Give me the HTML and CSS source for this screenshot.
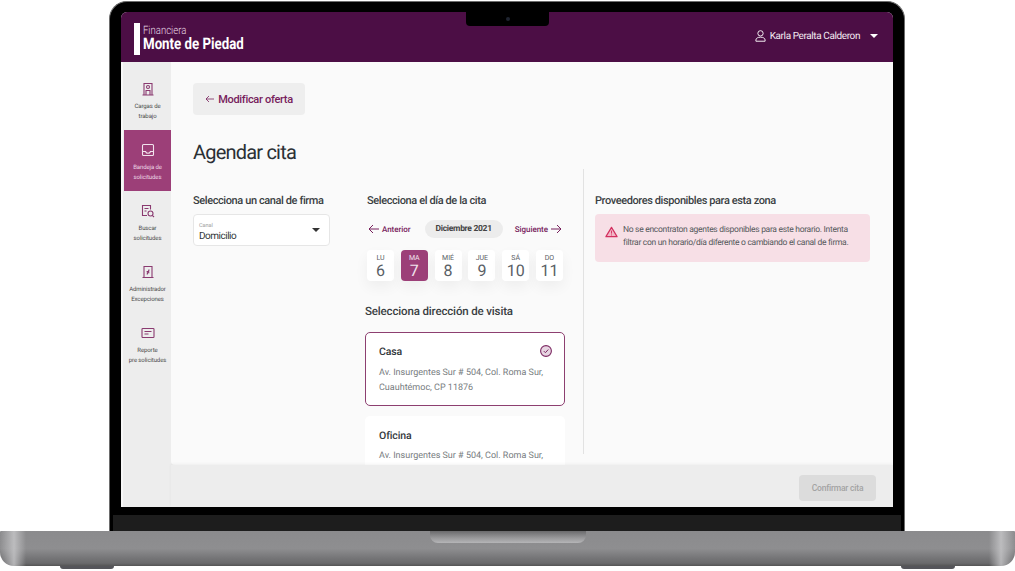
FILE: index.html
```html
<!DOCTYPE html>
<html lang="es">
<head>
  <meta charset="UTF-8" />
  <title>Agendar cita - Monte de Piedad</title>
  <link rel="stylesheet" href="styles.css">
</head>
<body>
  <div class="laptop">
    <div class="lid">
      <div class="screen">
        <div class="notch"><span class="camera"></span></div>
        <header class="topbar">
          <div class="logo">
            <span class="logo-bar"></span>
            <div class="logo-text">
              <span class="logo-small">Financiera</span>
              <span class="logo-big">Monte de Piedad</span>
            </div>
          </div>
          <div class="user">
            <svg class="user-icon" viewBox="0 0 12 13" fill="none" stroke="#fff" stroke-width="1"><circle cx="6" cy="3.6" r="2.9"/><path d="M1 12.2h10v-1.4c0-1.8-2-3-5-3s-5 1.2-5 3z"/></svg>
            <span class="user-name">Karla Peralta Calderon</span>
            <span class="caret caret-white"></span>
          </div>
        </header>
        <div class="app">
          <nav class="sidebar">
            <a class="nav-item">
              <svg viewBox="0 0 14 14" fill="none" stroke="currentColor" stroke-width="1.1"><path d="M3 13V1.500h8V13M1.500 13h11"/><circle cx="7" cy="5" r="1.500"/><path d="M5 13V8.500h4V13"/></svg>
              <span>Cargas de<br>trabajo</span>
            </a>
            <a class="nav-item active">
              <svg viewBox="0 0 14 14" fill="none" stroke="currentColor" stroke-width="1.1"><rect x="1.500" y="1.500" width="11" height="11" rx="1"/><path d="M1.500 8.500h3c.4 1.200 1.300 1.800 2.500 1.800s2.100-.6 2.500-1.800h3"/></svg>
              <span>Bandeja de<br>solicitudes</span>
            </a>
            <a class="nav-item">
              <svg viewBox="0 0 14 14" fill="none" stroke="currentColor" stroke-width="1.1"><path d="M6 11.500H1.500v-10h8v4M3.500 4.500h4M3.500 7h2"/><circle cx="9.500" cy="9.500" r="2.500"/><path d="M11.300 11.300l1.700 1.700"/></svg>
              <span>Buscar<br>solicitudes</span>
            </a>
            <a class="nav-item">
              <svg viewBox="0 0 14 14" fill="none" stroke="currentColor" stroke-width="1.1"><path d="M3 12.500V1.500h8v11M1.500 12.500h11"/><path d="M8.200 4.500L6 9.500M5.600 6.500h2.600M5.800 7.800h2.600"/></svg>
              <span>Administrador<br>Excepciones</span>
            </a>
            <a class="nav-item">
              <svg viewBox="0 0 14 14" fill="none" stroke="currentColor" stroke-width="1.1"><rect x="1" y="2.500" width="12" height="9" rx=".8"/><path d="M3.500 5.500h7M3.500 8h4"/></svg>
              <span>Reporte<br>pre solicitudes</span>
            </a>
          </nav>
          <div class="main">
            <div class="content">
              <button class="back-btn">
                <svg viewBox="0 0 9 8" fill="none" stroke="currentColor" stroke-width=".8"><path d="M9 4H1M4 1L1 4l3 3"/></svg>
                Modificar oferta
              </button>
              <h1>Agendar cita</h1>
              <div class="columns">
                <section class="col-channel">
                  <h2>Selecciona un canal de firma</h2>
                  <div class="select">
                    <div class="select-text">
                      <div class="select-label">Canal</div>
                      <div class="select-value">Domicilio</div>
                    </div>
                    <span class="caret caret-dark"></span>
                  </div>
                </section>
                <section class="col-date">
                  <h2 class="date-title">Selecciona el día de la cita</h2>
                  <div class="month-nav">
                    <a class="month-link">
                      <svg viewBox="0 0 11 10" fill="none" stroke="currentColor"><path d="M11 5H1M5 1L1 5l4 4"/></svg>
                      Anterior
                    </a>
                    <span class="month-pill">Diciembre 2021</span>
                    <a class="month-link">
                      Siguiente
                      <svg viewBox="0 0 11 10" fill="none" stroke="currentColor"><path d="M0 5h10M6 1l4 4-4 4"/></svg>
                    </a>
                  </div>
                  <div class="days">
                    <div class="day"><small>LU</small><b>6</b></div>
                    <div class="day selected"><small>MA</small><b>7</b></div>
                    <div class="day"><small>MIÉ</small><b>8</b></div>
                    <div class="day"><small>JUE</small><b>9</b></div>
                    <div class="day"><small>SÁ</small><b>10</b></div>
                    <div class="day"><small>DO</small><b>11</b></div>
                  </div>
                  <h2 class="address-title">Selecciona dirección de visita</h2>
                  <div class="address-card checked">
                    <div class="address-head">
                      <h3>Casa</h3>
                      <svg class="check" viewBox="0 0 12 12" fill="none"><circle cx="6" cy="6" r="5.400" fill="#e7d5e2" stroke="#7d2a63" stroke-width="1.100"/><path d="M3.800 6.100l1.600 1.600 2.900-3.200" stroke="#7d2a63" stroke-width="1"/></svg>
                    </div>
                    <p>Av. Insurgentes Sur # 504, Col. Roma Sur, Cuauhtémoc, CP 11876</p>
                  </div>
                  <div class="address-card">
                    <div class="address-head"><h3>Oficina</h3></div>
                    <p>Av. Insurgentes Sur # 504, Col. Roma Sur,</p>
                  </div>
                </section>
                <section class="col-providers">
                  <h2>Proveedores disponibles para esta zona</h2>
                  <div class="alert">
                    <svg viewBox="0 0 14 12" fill="none"><path d="M7 1l6 10H1z" fill="#f2b6c6" stroke="#d32f5f" stroke-width="1.300" stroke-linejoin="round"/><path d="M7 4.500v3.200M7 8.700v1" stroke="#d32f5f"/></svg>
                    <p>No se encontraton agentes disponibles para este horario. Intenta filtrar con un horario/día diferente o cambiando el canal de firma.</p>
                  </div>
                </section>
              </div>
            </div>
            <footer class="actions">
              <button class="confirm-btn" disabled>Confirmar cita</button>
            </footer>
          </div>
        </div>
      </div>
      <div class="chin"></div>
    </div>
    <div class="base">
      <span class="base-notch"></span>
      <span class="foot foot-left"></span>
      <span class="foot foot-right"></span>
    </div>
  </div>
</body>
</html>
```

FILE: styles.css
```css
* {
  box-sizing: border-box;
}
html, body {
  margin: 0;
  height: 571px;
  overflow: hidden;
  background: #fff;
}
body {
  font-family: Roboto, "Liberation Sans", sans-serif;
  color: #2f3437;
  text-rendering: geometricPrecision;
}
.laptop {
  width: 1015px;
}
.lid {
  width: 796px;
  height: 530px;
  margin: 1px 0 0 109px;
  padding: 10px 11px 0;
  display: flex;
  flex-direction: column;
  background: #000;
  border: 1px solid #6d6d6d;
  border-bottom: none;
  border-radius: 18px 18px 0 0;
}
.screen {
  position: relative;
  width: 772px;
  height: 495px;
  display: flex;
  flex-direction: column;
  flex: none;
  overflow: hidden;
  background: #ededed;
  border-radius: 6px 6px 0 0;
}
.chin {
  flex: none;
  height: 16px;
  margin: 8px -8px 0;
  background: #1d1d1d;
}
.notch {
  position: absolute;
  top: 0;
  left: 345px;
  width: 83px;
  height: 14px;
  display: flex;
  align-items: center;
  justify-content: center;
  background: #000;
  border-radius: 0 0 4px 4px;
}
.camera {
  width: 4px;
  height: 4px;
  border-radius: 50%;
  background: #1f2430;
}
.topbar {
  flex: none;
  height: 50px;
  display: flex;
  align-items: center;
  justify-content: space-between;
  padding: 0 15px 0 13px;
  background: #4c0e45;
  color: #fff;
}
.logo {
  display: flex;
  align-items: stretch;
  height: 32px;
  margin-top: 3px;
  gap: 3px;
}
.logo-bar {
  width: 6px;
  background: #fff;
}
.logo-text {
  display: flex;
  flex-direction: column;
  justify-content: center;
  margin-top: -2px;
  transform: scaleX(.83);
  transform-origin: left center;
  white-space: nowrap;
}
.logo-small {
  font-size: 11.500px;
  font-weight: 300;
  line-height: 12px;
  color: #e6d8e4;
}
.logo-big {
  font-size: 16px;
  font-weight: 700;
  line-height: 16px;
}
.user {
  display: flex;
  align-items: center;
  margin-top: -2px;
}
.user-icon {
  width: 11px;
  height: 12px;
  margin-right: 4px;
}
.user-name {
  font-size: 10px;
  letter-spacing: -.4px;
  margin-right: 10px;
  color: #f3e9f1;
}
.caret {
  width: 0;
  height: 0;
  border-left: 4px solid transparent;
  border-right: 4px solid transparent;
}
.caret-white {
  border-top: 4px solid #fff;
}
.caret-dark {
  border-top: 4px solid #333;
}
.app {
  flex: 1;
  min-height: 0;
  display: flex;
}
.sidebar {
  flex: none;
  width: 50px;
  padding: 7px 0 0 1px;
  background: #ededed;
  border-left: 2px solid #f7f7f7;
}
.nav-item {
  height: 61px;
  display: flex;
  flex-direction: column;
  align-items: center;
  padding-top: 13px;
  font-size: 6px;
  letter-spacing: -.1px;
  line-height: 10px;
  text-align: center;
  color: #4a4a4a;
  white-space: nowrap;
}
.nav-item svg {
  width: 14px;
  height: 14px;
  margin-bottom: 6px;
  color: #8a3a70;
}
.nav-item.active {
  background: #9c3f78;
  color: #edd9e7;
}
.nav-item.active svg {
  color: #f1e3ed;
}
.main {
  flex: 1;
  min-width: 0;
  display: flex;
  flex-direction: column;
}
.content {
  flex: 1;
  min-height: 0;
  overflow: hidden;
  padding: 21px 22px 0;
  background: #fafafa;
  border-radius: 0 0 0 4px;
}
.back-btn {
  width: 112px;
  height: 32px;
  padding: 0;
  display: flex;
  align-items: center;
  justify-content: center;
  gap: 4px;
  border: none;
  border-radius: 4px;
  background: #eeeeee;
  color: #77215c;
  font-family: inherit;
  font-size: 11px;
  letter-spacing: -.3px;
  font-weight: 500;
}
.back-btn svg {
  width: 9px;
  height: 8px;
}
h1 {
  margin: 25px 0 0;
  font-size: 20px;
  letter-spacing: -.8px;
  line-height: 24px;
  font-weight: 400;
  color: #2b3035;
}
.columns {
  display: flex;
  margin-top: 30px;
}
h2 {
  margin: 0;
  font-size: 11px;
  letter-spacing: -.4px;
  line-height: 14px;
  font-weight: 500;
  color: #3a3f43;
  white-space: nowrap;
}
.col-channel {
  flex: none;
  width: 137px;
  margin-right: 35px;
}
.select {
  height: 32px;
  margin-top: 6px;
  padding: 0 9px 0 5px;
  display: flex;
  align-items: center;
  justify-content: space-between;
  background: #fff;
  border: 1px solid #e6e6e6;
  border-radius: 4px;
}
.select-text {
  margin-top: 6px;
}
.select-label {
  font-size: 5.500px;
  line-height: 7px;
  color: #9a9a9a;
}
.select-value {
  margin-top: 1px;
  font-size: 10px;
  letter-spacing: -.5px;
  line-height: 12px;
  color: #2f3437;
}
.col-date {
  flex: none;
  width: 200px;
  height: 285px;
}
.date-title {
  padding-left: 2px;
}
.month-nav {
  display: flex;
  align-items: center;
  justify-content: space-between;
  margin-top: 12px;
  padding: 0 3px;
  height: 18px;
}
.month-link {
  display: flex;
  align-items: center;
  gap: 3px;
  font-size: 8px;
  letter-spacing: -.05px;
  font-weight: 500;
  color: #77215c;
}
.month-link svg {
  width: 11px;
  height: 10px;
}
.month-pill {
  flex: none;
  width: 78px;
  height: 18px;
  margin-left: 14px;
  margin-right: 12px;
  line-height: 18px;
  text-align: center;
  border-radius: 9px;
  background: #ececec;
  font-size: 8.500px;
  font-weight: 700;
  letter-spacing: -.3px;
  color: #444;
}
.days {
  display: flex;
  gap: 6.800px;
  margin-top: 12px;
  padding-left: 2px;
}
.day {
  width: 27px;
  height: 31px;
  display: flex;
  flex-direction: column;
  align-items: center;
  padding-top: 4px;
  background: #fff;
  border-radius: 4px;
  box-shadow: 0 6px 14px rgba(0,0,0,.05);
  color: #5a6066;
}
.day small {
  font-size: 7px;
  line-height: 8px;
}
.day b {
  margin-top: 1px;
  font-size: 16px;
  line-height: 16px;
  font-weight: 400;
}
.day.selected {
  background: #9c3f78;
  color: #f1e3ed;
}
.address-title {
  margin-top: 23px;
  font-size: 11.500px;
  letter-spacing: -.15px;
}
.address-card {
  margin-top: 14px;
  padding: 12px 8px 0 14px;
  height: 74px;
  background: #fff;
  border-radius: 5px;
}
.address-card + .address-card {
  margin-top: 10px;
}
.address-card.checked {
  padding: 11px 8px 0 13px;
  border: 1px solid #8d3f70;
}
.address-head {
  display: flex;
  justify-content: space-between;
  align-items: center;
  height: 14px;
  padding-right: 4px;
}
h3 {
  margin: 0;
  font-size: 10.500px;
  letter-spacing: -.1px;
  font-weight: 500;
  color: #33383c;
}
.check {
  width: 12px;
  height: 12px;
}
.address-card p {
  margin: 7px 0 0;
  font-size: 9px;
  line-height: 15px;
  color: #777c80;
}
.address-card.checked p {
  margin-top: 8px;
}
.col-providers {
  flex: none;
  width: 288px;
  height: 285px;
  margin: -25px 0 0 18px;
  padding: 25px 0 0 11px;
  border-left: 1px solid #e2e2e2;
}
.alert {
  display: flex;
  gap: 5px;
  width: 275px;
  height: 48px;
  margin-top: 6px;
  padding: 10px 12px 0 10px;
  background: #f7dfe6;
  border-radius: 4px;
}
.alert svg {
  flex: none;
  width: 13px;
  height: 12px;
  margin-top: 2px;
}
.alert p {
  margin: 0;
  font-size: 8.500px;
  letter-spacing: -.3px;
  line-height: 13px;
  color: #55595c;
}
.actions {
  flex: none;
  height: 42px;
  display: flex;
  align-items: flex-start;
  justify-content: flex-end;
  padding: 10px 17px 0 0;
  background: #ededed;
  box-shadow: 0 -1px 3px rgba(0,0,0,.05);
}
.confirm-btn {
  width: 77px;
  height: 26px;
  border: none;
  border-radius: 4px;
  background: #dcdcdc;
  color: #a3a3a3;
  font-family: inherit;
  font-size: 8.500px;
  letter-spacing: -.2px;
  font-weight: 500;
}
.base {
  position: relative;
  height: 35px;
  border-radius: 1px 1px 14px 14px;
  background:
    linear-gradient(90deg, rgba(185,185,187,0) 0, rgba(200,200,202,.8) 14px, rgba(185,185,187,0) 26px, rgba(185,185,187,0) 989px, rgba(200,200,202,.8) 1001px, rgba(185,185,187,0) 100%),
    linear-gradient(#8b8b8d 0, #8e8e90 50%, #737375 80%, #6a6a6c 92%, #555 100%);
}
.base-notch {
  position: absolute;
  top: 0;
  left: 430px;
  width: 156px;
  height: 12px;
  border-radius: 0 0 8px 8px;
  background: linear-gradient(#6a6a6c, #9a9a9c 60%, #b5b5b7);
}
.foot {
  position: absolute;
  top: 35px;
  width: 54px;
  height: 3px;
  border-radius: 0 0 6px 6px;
  background: #55555a;
}
.foot-left {
  left: 60px;
}
.foot-right {
  left: 901px;
}
```
